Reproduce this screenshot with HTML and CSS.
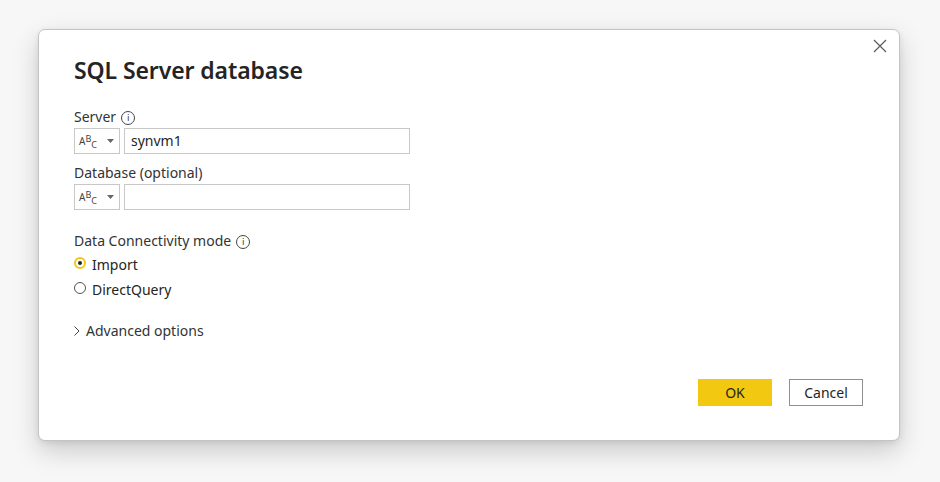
FILE: index.html
```html
<!DOCTYPE html>
<html>
<head>
<meta charset="utf-8">
<link rel="stylesheet" href="styles.css">
</head>
<body>
<div class="dialog">
  <button class="close" aria-label="Close">
    <svg width="14" height="14" viewBox="0 0 14 14"><path d="M1 1L13 13M13 1L1 13" stroke="#5a5a5a" stroke-width="1.2" fill="none"/></svg>
  </button>
  <h1 class="title">SQL Server database</h1>
  <div class="field">
    <div class="label">Server <span class="info">i</span></div>
    <div class="row">
      <div class="type">
        <span class="abc">A<sup>B</sup><sub>C</sub></span>
        <svg class="caret" width="7" height="4" viewBox="0 0 7 4"><path d="M0 0H7L3.5 4Z" fill="#666"/></svg>
      </div>
      <div class="input">synvm1</div>
    </div>
  </div>
  <div class="field">
    <div class="label">Database (optional)</div>
    <div class="row">
      <div class="type">
        <span class="abc">A<sup>B</sup><sub>C</sub></span>
        <svg class="caret" width="7" height="4" viewBox="0 0 7 4"><path d="M0 0H7L3.5 4Z" fill="#666"/></svg>
      </div>
      <div class="input"></div>
    </div>
  </div>
  <div class="mode">
    <div class="label">Data Connectivity mode <span class="info">i</span></div>
    <div class="radio"><span class="dot on"></span>Import</div>
    <div class="radio"><span class="dot"></span>DirectQuery</div>
  </div>
  <div class="advanced">
    <svg width="6" height="10" viewBox="0 0 6 10"><path d="M0.5 0.5L5 5L0.5 9.5" stroke="#444" stroke-width="1" fill="none"/></svg>
    Advanced options
  </div>
  <div class="actions">
    <button class="btn ok">OK</button>
    <button class="btn cancel">Cancel</button>
  </div>
</div>
</body>
</html>
```
FILE: styles.css
```css
html, body {
  margin: 0;
  padding: 0;
}
body {
  width: 940px;
  height: 482px;
  background: #f7f7f7;
  font-family: "Noto Sans", "Open Sans", sans-serif;
  color: #252423;
  padding: 29px 0 0 38px;
  box-sizing: border-box;
  overflow: hidden;
}
.dialog {
  position: relative;
  width: 862px;
  height: 412px;
  box-sizing: border-box;
  background: #fff;
  border: 1px solid #c4c4c4;
  border-radius: 7px;
  box-shadow: 0 10px 26px rgba(0,0,0,0.18), 0 2px 6px rgba(0,0,0,0.08);
  padding: 24px 36px 0 35px;
  display: flex;
  flex-direction: column;
}
.close {
  position: absolute;
  top: 9px;
  right: 12px;
  border: 0;
  background: none;
  padding: 0;
  width: 14px;
  height: 14px;
}
.title {
  margin: 0;
  font-size: 23px;
  font-weight: 600;
  line-height: 32px;
  color: #252423;
  letter-spacing: -0.1px;
}
.field {
  display: flex;
  flex-direction: column;
}
.title + .field { margin-top: 21px; }
.field + .field { margin-top: 9px; }
.label {
  font-size: 14px;
  line-height: 20px;
  display: flex;
  align-items: center;
  gap: 5px;
  color: #333;
}
.info {
  width: 12px;
  height: 12px;
  border: 1px solid #444;
  border-radius: 50%;
  font-size: 9px;
  line-height: 12px;
  text-align: center;
  font-family: "DejaVu Sans", sans-serif;
  color: #333;
  box-sizing: content-box;
  margin-top: 2px;
}
.row {
  display: flex;
  gap: 4px;
  margin-top: 1px;
}
.type {
  width: 46px;
  height: 26px;
  box-sizing: border-box;
  border: 1px solid #c8c8c8;
  display: flex;
  align-items: center;
  padding-left: 4px;
  gap: 8px;
}
.abc {
  font-size: 10px;
  color: #444;
  line-height: 1;
  display: inline-flex;
  align-items: center;
  width: 20px;
}
.abc sup {
  font-size: 9px;
  vertical-align: 0;
  position: relative;
  top: -3px;
}
.abc sub {
  font-size: 9px;
  vertical-align: 0;
  position: relative;
  top: 3px;
}
.input {
  width: 286px;
  height: 26px;
  box-sizing: border-box;
  border: 1px solid #c8c8c8;
  font-size: 14px;
  line-height: 24px;
  padding-left: 6px;
  color: #252423;
}
.mode {
  margin-top: 21px;
  display: flex;
  flex-direction: column;
}
.radio {
  display: flex;
  align-items: center;
  font-size: 14px;
  line-height: 25px;
  gap: 6px;
  color: #252423;
}
.mode .label + .radio { margin-top: 1px; }
.dot {
  width: 12px;
  height: 12px;
  box-sizing: border-box;
  border-radius: 50%;
  border: 1px solid #555;
  position: relative;
  margin-top: -4px;
}
.dot.on {
  border: 2px solid #f2c811;
}
.dot.on::after {
  content: "";
  position: absolute;
  width: 4px;
  height: 4px;
  left: 2px;
  top: 2px;
  border-radius: 50%;
  background: #252423;
}
.advanced {
  margin-top: 19px;
  font-size: 14px;
  line-height: 20px;
  display: flex;
  align-items: center;
  gap: 6px;
  color: #333;
}
.actions {
  margin-top: auto;
  margin-bottom: 34px;
  display: flex;
  justify-content: flex-end;
  gap: 17px;
}
.btn {
  height: 27px;
  font-family: "Noto Sans", "Open Sans", sans-serif;
  font-size: 14px;
  color: #252423;
  padding: 0;
}
.ok {
  width: 74px;
  background: #f2c811;
  border: 0;
}
.cancel {
  width: 74px;
  background: #fff;
  border: 1px solid #8f8f8f;
}
```
